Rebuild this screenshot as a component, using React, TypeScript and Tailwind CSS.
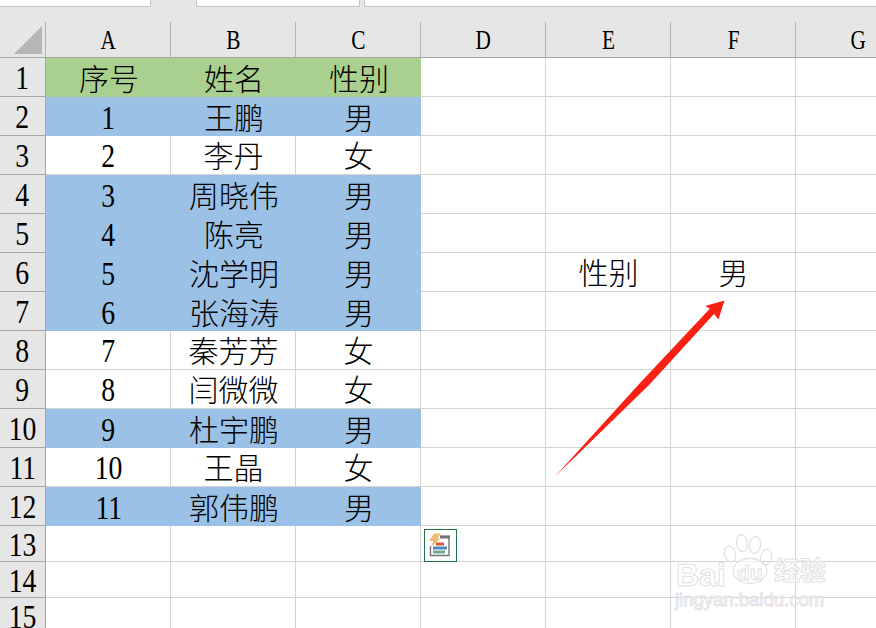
const columns = ["A", "B", "C", "D", "E", "F", "G"];

type Row = { n: number; a?: string; b?: string; c?: string; e?: string; f?: string; fill?: string };

const GREEN = "bg-[#a9d08e]";
const BLUE = "bg-[#9bc2e6]";

const rows: Row[] = [
  { n: 1, a: "序号", b: "姓名", c: "性别", fill: GREEN },
  { n: 2, a: "1", b: "王鹏", c: "男", fill: BLUE },
  { n: 3, a: "2", b: "李丹", c: "女" },
  { n: 4, a: "3", b: "周晓伟", c: "男", fill: BLUE },
  { n: 5, a: "4", b: "陈亮", c: "男", fill: BLUE },
  { n: 6, a: "5", b: "沈学明", c: "男", fill: BLUE, e: "性别", f: "男" },
  { n: 7, a: "6", b: "张海涛", c: "男", fill: BLUE },
  { n: 8, a: "7", b: "秦芳芳", c: "女" },
  { n: 9, a: "8", b: "闫微微", c: "女" },
  { n: 10, a: "9", b: "杜宇鹏", c: "男", fill: BLUE },
  { n: 11, a: "10", b: "王晶", c: "女" },
  { n: 12, a: "11", b: "郭伟鹏", c: "男", fill: BLUE },
  { n: 13 },
  { n: 14 },
  { n: 15 },
];

function Number_({ value }: { value: string | number }) {
  return <span className="inline-block text-[33px] leading-none scale-x-[0.84] mt-[3px]">{value}</span>;
}

function Cell({ text, fill }: { text?: string; fill?: string }) {
  const numeric = text !== undefined && /^\d+$/.test(text);
  return (
    <div
      className={`w-[125px] shrink-0 flex items-center justify-center ${
        fill ? fill : "border-r border-b border-[#d4d4d4] bg-white"
      }`}
    >
      {numeric ? <Number_ value={text as string} /> : text ? <span className="leading-none mt-[4px] ml-[1px]">{text}</span> : null}
    </div>
  );
}

function Watermark() {
  const outline = "text-white/60 [-webkit-text-stroke:1px_#e2e2e2] leading-none whitespace-nowrap";
  return (
    <div className="absolute left-[665px] top-[530px] w-[170px] h-[85px] font-['Liberation_Sans','Noto_Sans_CJK_SC',sans-serif] pointer-events-none">
      <svg className="absolute left-0 top-0" width="170" height="60" viewBox="0 0 170 60">
        <g fill="none" stroke="#e2e2e2" strokeWidth="1.3">
          <ellipse cx="65" cy="24" rx="5.5" ry="8" transform="rotate(-15 65 24)" />
          <ellipse cx="77" cy="13" rx="5.5" ry="8.5" transform="rotate(-8 77 13)" />
          <ellipse cx="90" cy="15" rx="5.5" ry="8.5" transform="rotate(8 90 15)" />
          <ellipse cx="101" cy="27" rx="5.5" ry="8" transform="rotate(15 101 27)" />
          <ellipse cx="85" cy="41" rx="17" ry="12.5" fill="#ffffff" fillOpacity="0.6" />
        </g>
      </svg>
      <span className={`absolute left-[11px] top-[29px] text-[32px] font-bold ${outline}`}>Bai</span>
      <span className={`absolute left-[72px] top-[32px] text-[21px] font-bold ${outline}`}>du</span>
      <span className={`absolute left-[109px] top-[28px] text-[26px] font-bold ${outline}`}>经验</span>
      <span className={`absolute left-[10px] top-[61px] text-[18.5px] ${outline}`}>jingyan.baidu.com</span>
    </div>
  );
}

export default function App() {
  return (
    <div className="relative w-[876px] h-[628px] overflow-hidden bg-white text-black text-[30px] font-light font-['Liberation_Serif','Noto_Sans_CJK_SC',serif]">
      {/* Ribbon remnants */}
      <div className="h-[22px] bg-[#e6e6e6] flex items-start">
        <div className="w-[151px] h-[7px] bg-white border-r border-b border-[#c6c6c6]" />
        <div className="w-[164px] h-[7px] ml-[45px] bg-white border-x border-b border-[#c6c6c6]" />
        <div className="flex-1 h-[7px] ml-[4px] bg-white border-l border-b border-[#c6c6c6]" />
      </div>

      {/* Column headers */}
      <div className="flex h-[36px] bg-[#e6e6e6] border-b border-[#a6a6a6]">
        <div className="w-[46px] shrink-0 border-r border-[#b4b4b4] flex">
          <svg width="45" height="35" viewBox="0 0 45 35">
            <polygon points="14,32 42,4 42,32" fill="#b6b6b6" />
          </svg>
        </div>
        {columns.map((c) => (
          <div
            key={c}
            className="w-[125px] shrink-0 border-r border-[#b4b4b4] flex items-center justify-center"
          >
            <span className="inline-block text-[28px] leading-none scale-x-[0.76] mt-[1px] ml-[1px]">{c}</span>
          </div>
        ))}
      </div>

      {/* Rows */}
      {rows.map((r) => (
        <div key={r.n} className={`flex ${r.n > 12 ? "h-[36px]" : "h-[39px]"}`}>
          <div className="w-[46px] shrink-0 bg-[#e6e6e6] border-r border-b border-[#a6a6a6] flex items-center justify-center">
            <Number_ value={r.n} />
          </div>
          <Cell text={r.a} fill={r.fill} />
          <Cell text={r.b} fill={r.fill} />
          <Cell text={r.c} fill={r.fill} />
          <Cell />
          <Cell text={r.e} />
          <Cell text={r.f} />
          <Cell />
        </div>
      ))}

      {/* Quick analysis button */}
      <div className="absolute left-[424px] top-[529px] w-[33px] h-[33px] bg-white border border-[#217346]">
        <svg width="31" height="31" viewBox="0 0 31 31">
          <path d="M15 6.5H24V25.5H5.5V16" fill="none" stroke="#767676" strokeWidth="1.4" />
          <rect x="15" y="5.5" width="10" height="3" fill="#767676" />
          <rect x="11" y="12.5" width="8" height="3" fill="#d9573a" />
          <rect x="8" y="16.5" width="14" height="3" fill="#4e86bd" />
          <rect x="8" y="20.5" width="12" height="3" fill="#6fa98f" />
          <polygon points="9,3.5 16,3.5 12.5,8.5 15.5,8.5 6,17 8.5,11 4,11" fill="#edbd78" />
        </svg>
      </div>

      {/* Red arrow */}
      <svg className="absolute left-0 top-0 pointer-events-none" width="876" height="628" viewBox="0 0 876 628">
        <polygon points="555,476.5 640,383 710,308.5 705,306 724.5,300.5 718.5,319.5 714,314 649,385" fill="#fb2014" />
      </svg>

      <Watermark />
    </div>
  );
}
